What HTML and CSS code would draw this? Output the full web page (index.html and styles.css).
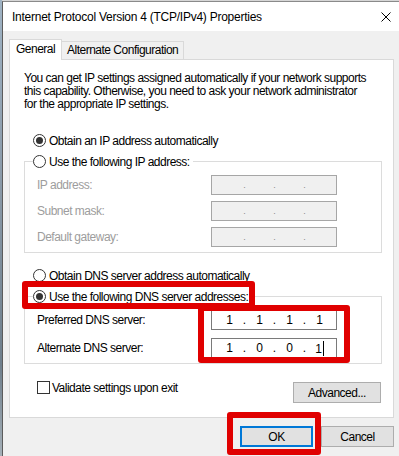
FILE: index.html
```html
<!DOCTYPE html>
<html lang="en">
<head>
    <meta charset="UTF-8">
    <meta name="viewport" content="width=device-width, initial-scale=1.0">
    <title>Internet Protocol Version 4 (TCP/IPv4) Properties</title>
    <link rel="stylesheet" href="styles.css">
</head>
<body>
    <div class="screen">
        <div class="desk"></div>
        <div class="window">
            <div class="titlebar">
                <span class="title">Internet Protocol Version 4 (TCP/IPv4) Properties</span>
                <svg class="close" width="10" height="10" viewBox="0 0 10 10">
                    <path d="M0.5 0.5L9.5 9.5M9.5 0.5L0.5 9.5" stroke="#000" stroke-width="1" fill="none"/>
                </svg>
            </div>
            <div class="client">
                <div class="tabs">
                    <div class="tab active">General</div>
                    <div class="tab">Alternate Configuration</div>
                </div>
                <div class="panel">
                    <p class="intro">You can get IP settings assigned automatically if your network supports<br>
                    this capability. Otherwise, you need to ask your network administrator<br>
                    for the appropriate IP settings.</p>

                    <label class="option first"><span class="radio checked"></span>Obtain an IP address automatically</label>
                    <fieldset class="group">
                        <legend><span class="radio"></span>Use the following IP address:</legend>
                        <div class="field disabled top">
                            <span class="label">IP address:</span>
                            <span class="ipbox"><span class="seg"></span><span class="dot">.</span><span class="seg"></span><span class="dot">.</span><span class="seg"></span><span class="dot">.</span><span class="seg"></span></span>
                        </div>
                        <div class="field disabled">
                            <span class="label">Subnet mask:</span>
                            <span class="ipbox"><span class="seg"></span><span class="dot">.</span><span class="seg"></span><span class="dot">.</span><span class="seg"></span><span class="dot">.</span><span class="seg"></span></span>
                        </div>
                        <div class="field disabled">
                            <span class="label">Default gateway:</span>
                            <span class="ipbox"><span class="seg"></span><span class="dot">.</span><span class="seg"></span><span class="dot">.</span><span class="seg"></span><span class="dot">.</span><span class="seg"></span></span>
                        </div>
                    </fieldset>

                    <label class="option dns-auto"><span class="radio"></span>Obtain DNS server address automatically</label>
                    <fieldset class="group dns">
                        <legend><span class="radio checked"></span>Use the following DNS server addresses:</legend>
                        <div class="field top">
                            <span class="label">Preferred DNS server:</span>
                            <span class="ipbox"><span class="seg">1</span><span class="dot">.</span><span class="seg">1</span><span class="dot">.</span><span class="seg">1</span><span class="dot">.</span><span class="seg">1</span></span>
                        </div>
                        <div class="field">
                            <span class="label">Alternate DNS server:</span>
                            <span class="ipbox"><span class="seg">1</span><span class="dot">.</span><span class="seg">0</span><span class="dot">.</span><span class="seg">0</span><span class="dot">.</span><span class="seg">1<span class="caret"></span></span></span>
                        </div>
                    </fieldset>

                    <div class="footer">
                        <label class="check"><span class="box"></span>Validate settings upon exit</label>
                        <button class="btn advanced">Advanced...</button>
                    </div>
                </div>
                <div class="buttons">
                    <button class="btn default">OK</button>
                    <button class="btn">Cancel</button>
                </div>
            </div>

            <!-- red annotation boxes -->
            <div class="mark mark-radio"></div>
            <div class="mark mark-dns"></div>
            <div class="mark mark-ok"></div>
        </div>
    </div>
</body>
</html>
```

FILE: styles.css
```css
body {
    margin: 0;
    background: #d6d6d6;
    font-family: "Liberation Sans", Arial, sans-serif;
    font-size: 12px;
    letter-spacing: -0.5px;
    color: #000;
}
.screen {
    display: flex;
    width: 399px;
    height: 456px;
    overflow: hidden;
}
.desk {
    width: 2px;
    flex: none;
    background: linear-gradient(#9fb3c4, #8a9aa8 40%, #6f7f8c 80%, #a5b0b8);
}
.window {
    position: relative;
    flex: none;
    width: 396px;
    height: 460px;
    margin-top: 1px;
    border-left: 1px solid #5c5c5c;
    border-top: 1px solid #8a8a8a;
    background: #f0f0f0;
}
.titlebar {
    height: 29px;
    background: #fff;
    display: flex;
    align-items: center;
    justify-content: space-between;
    padding: 0 8px 0 9px;
}
.title {
    letter-spacing: -0.25px;
}
.client {
    padding: 8px 5px 0 6px;
}
.tabs {
    display: flex;
    align-items: flex-end;
    height: 20px;
}
.tab {
    box-sizing: border-box;
    height: 18px;
    width: 123px;
    margin-left: -1px;
    padding: 0 0 0 5px;
    border: 1px solid #d9d9d9;
    border-bottom: 0;
    background: #f0f0f0;
    line-height: 17px;
    white-space: nowrap;
}
.tab.active {
    position: relative;
    z-index: 1;
    width: 53px;
    height: 21px;
    margin-left: 0;
    margin-bottom: -1px;
    padding-left: 6px;
    background: #fff;
    line-height: 18px;
}
.panel {
    box-sizing: border-box;
    height: 359px;
    background: #fff;
    border: 1px solid #d9d9d9;
    padding: 0 11px 0 14px;
}
.intro {
    margin: 12px 0 0;
    line-height: 13px;
    white-space: nowrap;
}
.option {
    display: flex;
    align-items: center;
    gap: 3px;
    height: 17px;
    padding-left: 9px;
}
.option.first {
    margin-top: 21px;
}
.option.dns-auto {
    margin-top: 14px;
}
.radio {
    box-sizing: border-box;
    flex: none;
    width: 13px;
    height: 13px;
    border: 1px solid #333;
    border-radius: 50%;
    background: #fff;
    display: flex;
    align-items: center;
    justify-content: center;
}
.radio.checked::after {
    content: "";
    width: 7px;
    height: 7px;
    border-radius: 50%;
    background: #333;
}
.group {
    margin: 4px 0 0;
    padding: 0 0 5px 0;
    border: 1px solid #dcdcdc;
    min-width: 0;
}
.group legend {
    display: flex;
    align-items: center;
    gap: 3px;
    height: 17px;
    margin-left: 8px;
    padding: 0 3px 0 0;
}
.field {
    display: flex;
    align-items: center;
    height: 20px;
    padding-left: 12px;
    margin-top: 6px;
}
.field.top {
    margin-top: 5px;
}
.dns .field {
    margin-top: 8px;
}
.dns .field.top {
    margin-top: 5px;
}
.label {
    width: 174px;
    flex: none;
}
.ipbox {
    box-sizing: border-box;
    display: flex;
    align-items: center;
    width: 126px;
    height: 20px;
    padding-left: 5px;
    border: 1px solid #7a7a7a;
    background: #fff;
    letter-spacing: 0;
}
.seg {
    width: 25px;
    text-align: center;
}
.dot {
    width: 5px;
    text-align: center;
}
.caret {
    display: inline-block;
    width: 1px;
    height: 15px;
    margin-left: 1px;
    background: #000;
    vertical-align: -3px;
}
.field.disabled {
    color: #9d9d9d;
}
.field.disabled .ipbox {
    background: #f0f0f0;
    border-color: #a6a6a6;
}
.field.disabled .dot {
    font-size: 9px;
    color: #8a8a8a;
}
.footer {
    display: flex;
    align-items: flex-start;
    margin-top: 15px;
    padding-left: 13px;
}
.check {
    display: flex;
    align-items: center;
    gap: 2px;
    height: 17px;
}
.check .box {
    box-sizing: border-box;
    width: 13px;
    height: 13px;
    border: 1px solid #333;
    background: #fff;
}
.btn {
    box-sizing: border-box;
    width: 73px;
    height: 21px;
    padding: 0;
    border: 1px solid #adadad;
    background: #e1e1e1;
    font: inherit;
    letter-spacing: inherit;
    color: #000;
}
.btn.advanced {
    width: 88px;
    margin: 3px 1px 0 auto;
}
.btn.default {
    border: 2px solid #0078d7;
}
.buttons {
    display: flex;
    justify-content: flex-end;
    gap: 8px;
    margin-top: 8px;
}
.mark {
    position: absolute;
    box-sizing: border-box;
    border: 6px solid #e00000;
    border-radius: 3px;
}
.mark-radio {
    left: 19px;
    top: 279px;
    width: 233px;
    height: 28px;
}
.mark-dns {
    left: 195px;
    top: 303px;
    width: 152px;
    height: 58px;
}
.mark-ok {
    left: 224px;
    top: 410px;
    width: 94px;
    height: 43px;
}
```
